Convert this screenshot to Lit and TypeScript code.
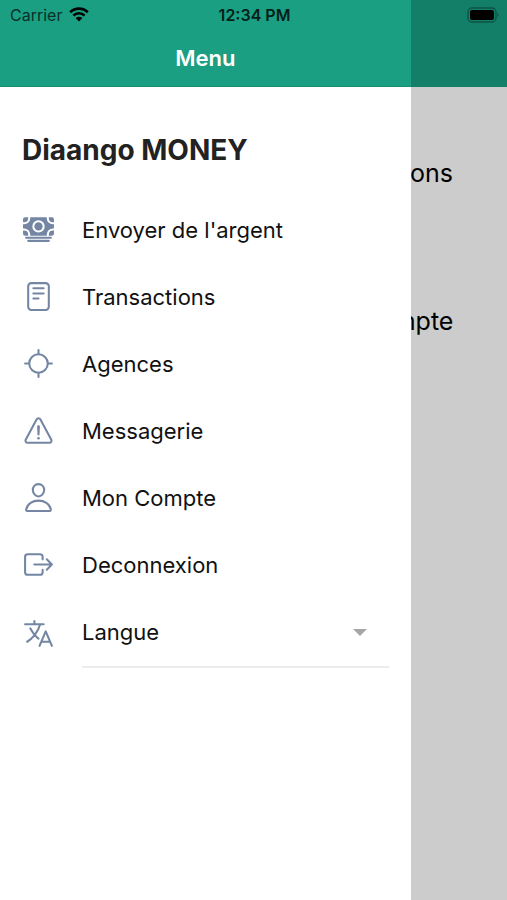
import { LitElement, html, css, svg, SVGTemplateResult } from "lit";
import { customElement } from "lit/decorators.js";

interface MenuItem {
  label: string;
  icon: SVGTemplateResult;
}

const cash = svg`
  <g class="fill">
    <path d="M448 400H64a16 16 0 010-32h384a16 16 0 010 32zM416 448H96a16 16 0 010-32h320a16 16 0 010 32zM32 272H16v48a32 32 0 0032 32h48v-16a64.07 64.07 0 00-64-64z"/>
    <path d="M480 240h16v-64h-16a96.11 96.11 0 01-96-96V64H128v16a96.11 96.11 0 01-96 96H16v64h16a96.11 96.11 0 0196 96v16h256v-16a96.11 96.11 0 0196-96zM256 304a96 96 0 1196-96 96.11 96.11 0 01-96 96z"/>
    <circle cx="256" cy="208" r="64"/>
    <path d="M416 336v16h48a32 32 0 0032-32v-48h-16a64.07 64.07 0 00-64 64zM480 144h16V96a32 32 0 00-32-32h-48v16a64.07 64.07 0 0064 64zM96 80V64H48a32 32 0 00-32 32v48h16a64.07 64.07 0 0064-64z"/>
  </g>`;

const reader = svg`
  <rect x="96" y="48" width="320" height="416" rx="48"/>
  <path d="M176 128h160M176 208h160M176 288h80"/>`;

const locate = svg`
  <circle cx="256" cy="256" r="144"/>
  <path d="M256 104V48M256 464v-56M408 256h56M48 256h56"/>`;

const warning = svg`
  <path d="M85.57 446.25h340.86a32 32 0 0028.17-47.17L284.18 82.58c-12.09-22.44-44.27-22.44-56.36 0L57.4 399.08a32 32 0 0028.17 47.17z"/>
  <path d="M250.26 195.39l5.74 122 5.73-121.95a5.74 5.74 0 00-5.79-6h0a5.74 5.74 0 00-5.68 5.95z"/>
  <circle class="fill" cx="256" cy="377" r="20"/>`;

const person = svg`
  <path d="M344 144c-3.92 52.87-44 96-88 96s-84.15-43.12-88-96c-4-55 35-96 88-96s92 42 88 96z"/>
  <path d="M256 304c-87 0-175.3 48-191.64 138.6C62.39 453.52 68.57 464 80 464h352c11.44 0 17.62-10.48 15.65-21.4C431.3 352 343 304 256 304z"/>`;

const exit = svg`
  <path d="M320 176v-40a40 40 0 00-40-40H88a40 40 0 00-40 40v240a40 40 0 0040 40h192a40 40 0 0040-40v-40M384 176l80 80-80 80M191 256h273"/>`;

const language = svg`
  <path d="M48 112h288M192 64v48M272 448l96-224 96 224M301.5 384h133M281.3 112S257 206 199 277 80 384 80 384M256 336s-35-27-72-75-56-85-56-85"/>`;

const items: MenuItem[] = [
  { label: "Envoyer de l'argent", icon: cash },
  { label: "Transactions", icon: reader },
  { label: "Agences", icon: locate },
  { label: "Messagerie", icon: warning },
  { label: "Mon Compte", icon: person },
  { label: "Deconnexion", icon: exit },
];

@customElement("side-menu")
export class SideMenu extends LitElement {
  static styles = css`
    :host {
      display: block;
      background: #fff;
    }
    .bar {
      height: 87px;
      box-sizing: border-box;
      padding-top: 29px;
      display: flex;
      align-items: center;
      justify-content: center;
      background: #1a9f82;
      border-bottom: 1px solid #178f75;
    }
    .title {
      margin: 0;
      font-size: 22px;
      line-height: 28px;
      font-weight: 600;
      color: #fff;
    }
    .brand {
      margin: 0;
      padding: 45px 22px 28px;
      font-size: 28px;
      line-height: 36px;
      font-weight: 700;
      color: #222;
    }
    .list {
      list-style: none;
      margin: 0;
      padding: 0 22px;
    }
    .row {
      width: 100%;
      height: 67px;
      display: flex;
      align-items: center;
      gap: 27px;
      padding: 0;
      border: 0;
      background: none;
      font: inherit;
      font-size: 22px;
      line-height: 30px;
      color: #111;
      text-align: left;
    }
    .row.choice {
      height: 70px;
    }
    .icon {
      flex: none;
      width: 33px;
      height: 33px;
      fill: none;
      stroke: #7486a3;
      stroke-width: 32;
      stroke-linecap: round;
      stroke-linejoin: round;
    }
    .icon .fill {
      fill: #7486a3;
      stroke: none;
    }
    .field {
      flex: 1;
      align-self: stretch;
      display: flex;
      align-items: center;
      padding-right: 22px;
      border-bottom: 2px solid #ececec;
    }
    .select {
      flex: 1;
      appearance: none;
      margin: 0;
      padding: 0;
      border: 0;
      background: none;
      font: inherit;
      color: inherit;
    }
    .caret {
      flex: none;
      width: 14px;
      height: 7px;
      fill: #a6a6a6;
    }
  `;

  private icon(shape: SVGTemplateResult) {
    return html`<svg class="icon" viewBox="0 0 512 512" aria-hidden="true">${shape}</svg>`;
  }

  render() {
    return html`
      <header class="bar"><h1 class="title">Menu</h1></header>
      <h2 class="brand">Diaango MONEY</h2>
      <ul class="list">
        ${items.map(
          (item) => html`<li>
            <button class="row" type="button">${this.icon(item.icon)}<span>${item.label}</span></button>
          </li>`
        )}
        <li>
          <label class="row choice" for="langue">
            ${this.icon(language)}
            <span class="field">
              <select class="select" id="langue" aria-label="Langue">
                <option>Langue</option>
              </select>
              <svg class="caret" viewBox="0 0 14 7" aria-hidden="true"><path d="M0 0h14L7 7z"/></svg>
            </span>
          </label>
        </li>
      </ul>
    `;
  }
}

@customElement("app-root")
export class AppRoot extends LitElement {
  static styles = css`
    :host {
      display: grid;
      min-height: 100vh;
      font-family: Inter, "Liberation Sans", sans-serif;
    }
    .page,
    .shade,
    .drawer,
    .status {
      grid-area: 1 / 1;
    }
    .page {
      background: #fff;
    }
    .page-bar {
      height: 87px;
      background: #1a9f82;
    }
    .tiles {
      display: grid;
      grid-template-columns: 1fr 1fr;
      padding: 12px 4px 0 0;
    }
    .tile {
      grid-column: 2;
      height: 148px;
      display: flex;
      align-items: center;
      justify-content: center;
      font-size: 25px;
      line-height: 32px;
      color: #000;
      text-decoration: none;
      white-space: nowrap;
    }
    .shade {
      background: rgba(0, 0, 0, 0.2);
    }
    .drawer {
      width: 81%;
    }
    .status {
      align-self: start;
      display: grid;
      grid-template-columns: 1fr auto 1fr;
      align-items: center;
      height: 29px;
      padding: 0 8px 0 10px;
      font-size: 16px;
      line-height: 20px;
      color: #08302a;
    }
    .carrier {
      display: flex;
      align-items: center;
      gap: 7px;
    }
    .wifi {
      width: 20px;
      height: 15px;
    }
    .time {
      font-weight: 600;
      color: #04201a;
    }
    .battery {
      justify-self: end;
      width: 32px;
      height: 16px;
    }
  `;

  render() {
    return html`
      <main class="page">
        <div class="page-bar"></div>
        <nav class="tiles">
          <a class="tile" href="#transactions">Transactions</a>
          <a class="tile" href="#compte">Mon Compte</a>
        </nav>
      </main>
      <div class="shade"></div>
      <side-menu class="drawer"></side-menu>
      <div class="status">
        <span class="carrier">
          Carrier
          <svg class="wifi" viewBox="0 0 20 15" aria-hidden="true">
            <path d="M1.2 5.2a12.6 12.6 0 0117.6 0M4.4 8.6a8 8 0 0111.2 0" fill="none" stroke="#000" stroke-width="2.6"/>
            <path d="M10 14.5l-3.4-3.4a4.9 4.9 0 016.8 0z"/>
          </svg>
        </span>
        <span class="time">12:34 PM</span>
        <svg class="battery" viewBox="0 0 32 16" aria-hidden="true">
          <rect x="1" y="1" width="28" height="14" rx="4" fill="none" stroke="#0c5444" stroke-width="1.4"/>
          <rect x="3" y="3" width="24" height="10" rx="2"/>
          <path d="M30.5 6c1.6 .6 1.6 3.4 0 4z" fill="#0c5444"/>
        </svg>
      </div>
    `;
  }
}
